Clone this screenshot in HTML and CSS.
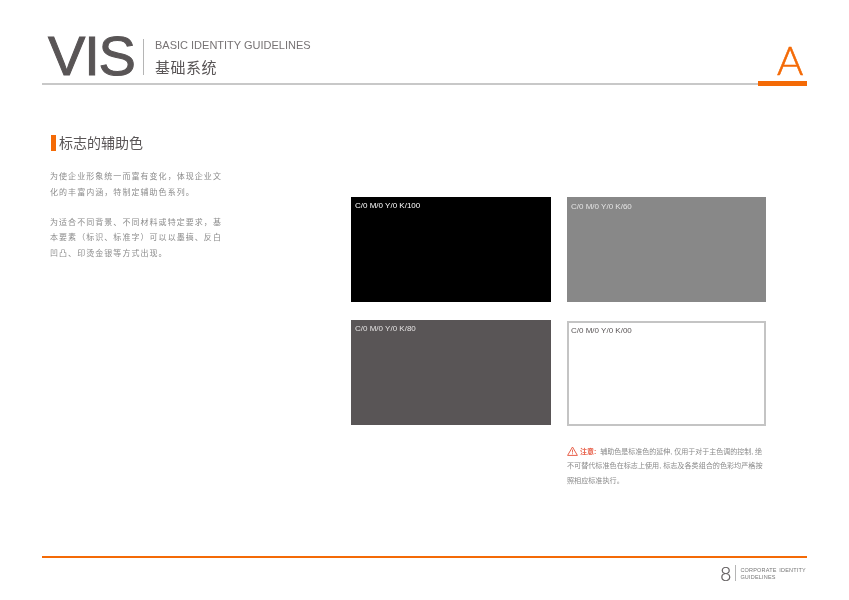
FILE: index.html
```html
<!DOCTYPE html>
<html>
<head>
    <title>VIS Basic Identity Guidelines</title>
    <link rel="stylesheet" href="styles.css">
</head>
<body>
    <div class="page">
        <div class="header">
            <div class="vis">VIS</div>
            <div class="header-titles">
                <div class="header-en">BASIC IDENTITY GUIDELINES</div>
                <div class="header-cn">基础系统</div>
            </div>
            <div class="section-letter">A</div>
        </div>

        <div class="content">
            <div class="intro">
                <h1 class="intro-title">标志的辅助色</h1>
                <p class="intro-text">为使企业形象统一而富有变化，体现企业文化的丰富内涵，特制定辅助色系列。</p>
                <p class="intro-text">为适合不同背景、不同材料或特定要求，基本要素（标识、标准字）可以以墨搞、反白凹凸、印烫金银等方式出现。</p>
            </div>

            <div class="colors">
                <div class="swatches">
                    <div class="swatch k100">C/0 M/0 Y/0 K/100</div>
                    <div class="swatch k60">C/0 M/0 Y/0 K/60</div>
                    <div class="swatch k80">C/0 M/0 Y/0 K/80</div>
                    <div class="swatch k00">C/0 M/0 Y/0 K/00</div>
                </div>
                <div class="note">
                    <div class="note-first">
                        <svg class="note-icon" width="11" height="10" viewBox="0 0 11 10">
                            <path d="M5.5 1 L10.4 9.4 L0.6 9.4 Z" fill="none" stroke="#e8604a" stroke-width="1"/>
                            <path d="M5.5 3.6 V6.6 M5.5 7.3 V8.3" fill="none" stroke="#e8604a" stroke-width="0.9"/>
                        </svg>
                        <span class="note-label">注意:</span>
                        <span>辅助色是标准色的延伸, 仅用于对于主色调的控制, 绝</span>
                    </div>
                    <div>不可替代标准色在标志上使用, 标志及各类组合的色彩均严格按</div>
                    <div>照相应标准执行。</div>
                </div>
            </div>
        </div>

        <div class="footer">
            <span class="page-number">8</span>
            <span class="footer-text">CORPORATE IDENTITY<br>GUIDELINES</span>
        </div>
    </div>
</body>
</html>
```

FILE: styles.css
```css
body {
    margin: 0;
    background-color: #ffffff;
    font-family: 'Liberation Sans', 'Noto Sans CJK SC', sans-serif;
    color: #595556;
}

.page {
    width: 765px;
    height: 600px;
    margin-left: 42px;
    display: flex;
    flex-direction: column;
    overflow: hidden;
    will-change: transform;
}

.header {
    height: 83px;
    display: flex;
    align-items: flex-start;
    border-bottom: 2px solid #c8c8c8;
    flex-shrink: 0;
}

.vis {
    width: 92px;
    margin: 25px 0 0 6px;
    font-size: 56px;
    line-height: 62px;
    letter-spacing: -1.2px;
    -webkit-text-stroke: 1px #595556;
    color: #595556;
}

.header-titles {
    margin: 39px 0 0 3px;
    padding-left: 11px;
    height: 36px;
    border-left: 1px solid #b5b5b5;
}

.header-en {
    font-size: 11px;
    line-height: 13px;
    color: #777374;
}

.header-cn {
    margin-top: 6px;
    font-size: 15px;
    line-height: 20px;
    letter-spacing: 0.5px;
    color: #595556;
}

.section-letter {
    margin-left: auto;
    align-self: flex-end;
    width: 49px;
    height: 45px;
    margin-bottom: -3px;
    padding-left: 19px;
    border-bottom: 5px solid #f46a06;
    box-sizing: border-box;
    font-family: 'Lato', sans-serif;
    font-size: 40px;
    line-height: 38px;
    font-weight: 300;
    -webkit-text-stroke: 0.6px #f46a06;
    color: #f46a06;
}

.content {
    flex: 1;
    display: flex;
    align-items: flex-start;
}

.intro {
    width: 174px;
    margin: 50px 0 0 8px;
}

.intro-title {
    margin: 0 0 18px 1px;
    padding-left: 3px;
    border-left: 5px solid #f46a06;
    font-size: 14px;
    line-height: 16px;
    font-weight: normal;
    color: #595556;
}

.intro-text {
    margin: 0 0 14.5px 0;
    font-size: 8px;
    line-height: 15.5px;
    letter-spacing: 1.05px;
    color: #8c8c8c;
}

.colors {
    width: 415px;
    margin: 112px 0 0 127px;
}

.swatches {
    display: grid;
    grid-template-columns: 200px 199px;
    grid-template-rows: 105px 105px;
    column-gap: 16px;
    row-gap: 18px;
}

.swatch {
    box-sizing: border-box;
    padding: 4px;
    font-size: 8px;
    line-height: 10px;
    color: #ffffff;
}

.k100 {
    background-color: #000000;
}

.k60 {
    background-color: #888888;
    padding-top: 5px;
    color: #e4e4e4;
}

.k80 {
    background-color: #595556;
    color: #e4e2e2;
}

.k00 {
    margin: 1px 0 -1px 0;
    border: 2px solid #c4c4c4;
    padding: 3px 2px;
    color: #595556;
}

.note {
    width: 199px;
    margin: 18.5px 0 0 216px;
    font-size: 7.1px;
    line-height: 15px;
    color: #8a8a8a;
    white-space: nowrap;
}

.note-first {
    display: flex;
    align-items: center;
    gap: 2px;
    font-size: 7px;
}

.note-icon {
    flex-shrink: 0;
}

.note-label {
    margin-right: 2px;
    color: #e8604a;
    font-weight: bold;
}

.footer {
    height: 42px;
    flex-shrink: 0;
    border-top: 2px solid #f46a06;
    display: flex;
    justify-content: flex-end;
    align-items: flex-start;
    padding-right: 1px;
}

.page-number {
    margin-top: 7px;
    padding-right: 4px;
    border-right: 1px solid #b5b5b5;
    height: 16px;
    font-family: 'Lato', sans-serif;
    font-size: 19px;
    line-height: 17px;
    font-weight: 300;
    -webkit-text-stroke: 0.2px #595556;
    color: #595556;
}

.footer-text {
    margin: 9px 0 0 4px;
    font-size: 5.5px;
    line-height: 7px;
    letter-spacing: 0.2px;
    word-spacing: 1px;
    color: #777777;
}
```
